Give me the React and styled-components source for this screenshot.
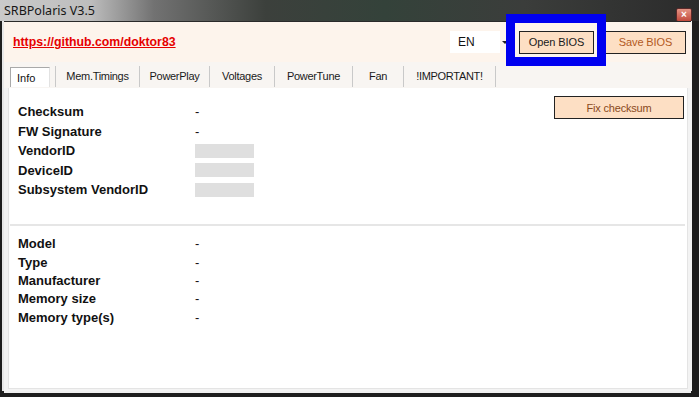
import React from "react"
import styled, { createGlobalStyle } from "styled-components"

const GlobalStyle = createGlobalStyle`
  html, body {
    margin: 0;
    padding: 0;
    background: #1d1d1d;
  }
  body {
    width: 699px;
    height: 397px;
    overflow: hidden;
  }
`

const Window = styled.div`
  position: relative;
  width: 699px;
  height: 397px;
  display: flex;
  flex-direction: column;
  background: #1e1e1e;
  font-family: "Liberation Sans", Arial, sans-serif;
  overflow: hidden;
`

const TitleBar = styled.div`
  height: 21px;
  flex: none;
  display: flex;
  align-items: center;
  justify-content: space-between;
  padding: 0 7px 0 4px;
  background: linear-gradient(
    to right,
    #cacaca 0%,
    #bdbdbd 13%,
    #727272 22%,
    #3c403c 38%,
    #34423a 55%,
    #3b3d3b 75%,
    #2b2b2b 100%
  );
`

const Title = styled.span`
  font-family: "Noto Sans", "Liberation Sans", sans-serif;
  font-size: 12.5px;
  color: #161616;
`

const CloseButton = styled.span`
  width: 14px;
  height: 12px;
  margin-top: 8px;
  border-radius: 2px;
  border: 1px solid #5a2a2a;
  background: linear-gradient(#e49484, #c24a3c);
  color: #fff;
  font-size: 10px;
  font-weight: bold;
  line-height: 11px;
  text-align: center;
`

const Frame = styled.div`
  flex: 1;
  display: flex;
  flex-direction: column;
  margin: 0 8px 6px 4px;
  border-top: 1px solid #2a2a2a;
  background: #f3f3f3;
  box-shadow: -2px 0 0 #e8e8e8, 1px 0 0 #f4f4f4, 0 2px 0 #f0f0f0;
`

const Header = styled.div`
  height: 40px;
  flex: none;
  display: flex;
  align-items: center;
  padding: 0 5px 0 9px;
  background: #fdf4ec;
`

const RepoLink = styled.a`
  font-size: 12.3px;
  font-weight: bold;
  color: #e60000;
  text-decoration: underline;
`

const Combo = styled.div`
  display: flex;
  align-items: center;
  margin-left: auto;
`

const ComboValue = styled.div`
  width: 42px;
  height: 22px;
  padding-left: 8px;
  background: #ffffff;
  font-size: 12px;
  line-height: 22px;
  color: #111;
`

const ComboArrow = styled.span`
  width: 0;
  height: 0;
  margin: 1px 4px 0 2px;
  border-left: 3px solid transparent;
  border-right: 3px solid transparent;
  border-top: 3px solid #222;
`

const ActionButton = styled.button`
  width: ${p => p.$width}px;
  height: 23px;
  margin-left: ${p => p.$gap}px;
  padding: 0;
  border: 1px solid #222;
  background: #fddfc4;
  color: ${p => p.$color};
  font-family: "Liberation Sans", Arial, sans-serif;
  font-size: 11px;
  letter-spacing: -0.1px;
`

const Highlight = styled.div`
  position: absolute;
  left: 506px;
  top: 14px;
  width: 82px;
  height: 34px;
  border: 9px solid #0000f0;
  pointer-events: none;
`

const TabStrip = styled.div`
  height: 26px;
  flex: none;
  display: flex;
  align-items: flex-end;
  padding: 0 0 1px 6px;
  box-sizing: border-box;
  background: #f8f5f2;
`

const ActiveTab = styled.div`
  width: 40px;
  height: 20px;
  padding-left: 6px;
  border-top: 1px solid #a9a9a9;
  border-left: 1px solid #a9a9a9;
  border-right: 1px solid #e2e2e2;
  box-sizing: border-box;
  background: #ffffff;
  font-size: 11px;
  line-height: 21px;
  color: #111;
  margin-right: 5px;
`

const Tab = styled.div`
  width: ${p => p.$width}px;
  height: 21px;
  border-left: 1px solid #c9c9c9;
  border-right: ${p => (p.$last ? "1px solid #c9c9c9" : "none")};
  box-sizing: border-box;
  text-align: center;
  font-size: 11px;
  letter-spacing: -0.3px;
  line-height: 20px;
  color: #1a1a1a;
`

const Panel = styled.div`
  flex: 1;
  display: flex;
  flex-direction: column;
  margin: 0 3px 2px 4px;
  border: 1px solid #e4e4e4;
  border-top: none;
  background: #ffffff;
`

const InfoSection = styled.div`
  display: flex;
  align-items: flex-start;
  padding: 8px 3px 0 9px;
`

const Fields = styled.div`
  display: flex;
  flex-direction: column;
  margin-top: ${p => p.$top || 0}px;
`

const Row = styled.div`
  display: flex;
  align-items: center;
  height: ${p => p.$height}px;
`

const Label = styled.span`
  width: 177px;
  font-size: 13px;
  font-weight: bold;
  color: #111;
`

const Value = styled.span`
  font-size: 13px;
  color: #111;
`

const EmptyField = styled.span`
  width: 59px;
  height: 14px;
  background: #dfdfdf;
`

const FixButton = styled.button`
  width: 130px;
  height: 23px;
  margin-left: auto;
  padding: 0;
  border: 1px solid #222;
  background: #fddfc4;
  color: #8a4a1c;
  font-family: "Liberation Sans", Arial, sans-serif;
  font-size: 11px;
  letter-spacing: -0.2px;
`

const Divider = styled.div`
  height: 2px;
  margin: 24.75px 2px 0 1px;
  background: #e6e6e6;
`

const MemorySection = styled.div`
  padding: 8.85px 0 0 9px;
`

const tabs = [
  { name: "Mem.Timings", width: 84 },
  { name: "PowerPlay", width: 70 },
  { name: "Voltages", width: 65 },
  { name: "PowerTune", width: 78 },
  { name: "Fan", width: 51 },
  { name: "!IMPORTANT!", width: 93 },
]

const infoFields = [
  { label: "Checksum", value: "-" },
  { label: "FW Signature", value: "-" },
  { label: "VendorID", empty: true },
  { label: "DeviceID", empty: true },
  { label: "Subsystem VendorID", empty: true },
]

const memoryFields = ["Model", "Type", "Manufacturer", "Memory size", "Memory type(s)"]

const App = () => (
  <Window>
    <GlobalStyle />
    <TitleBar>
      <Title>SRBPolaris V3.5</Title>
      <CloseButton>×</CloseButton>
    </TitleBar>
    <Frame>
      <Header>
        <RepoLink>https://github.com/doktor83</RepoLink>
        <Combo>
          <ComboValue>EN</ComboValue>
          <ComboArrow />
        </Combo>
        <ActionButton $width={75} $gap={7} $color="#1a1a1a">
          Open BIOS
        </ActionButton>
        <ActionButton $width={81} $gap={11} $color="#b35a1f">
          Save BIOS
        </ActionButton>
      </Header>
      <TabStrip>
        <ActiveTab>Info</ActiveTab>
        {tabs.map((tab, id) => (
          <Tab key={id} $width={tab.width} $last={id === tabs.length - 1}>
            {tab.name}
          </Tab>
        ))}
      </TabStrip>
      <Panel>
        <InfoSection>
          <Fields $top={5.75}>
            {infoFields.map(field => (
              <Row key={field.label} $height={19.5}>
                <Label>{field.label}</Label>
                {field.empty ? <EmptyField /> : <Value>{field.value}</Value>}
              </Row>
            ))}
          </Fields>
          <FixButton>Fix checksum</FixButton>
        </InfoSection>
        <Divider />
        <MemorySection>
          <Fields>
            {memoryFields.map(label => (
              <Row key={label} $height={18.3}>
                <Label>{label}</Label>
                <Value>-</Value>
              </Row>
            ))}
          </Fields>
        </MemorySection>
      </Panel>
    </Frame>
    <Highlight />
  </Window>
)

export default App
